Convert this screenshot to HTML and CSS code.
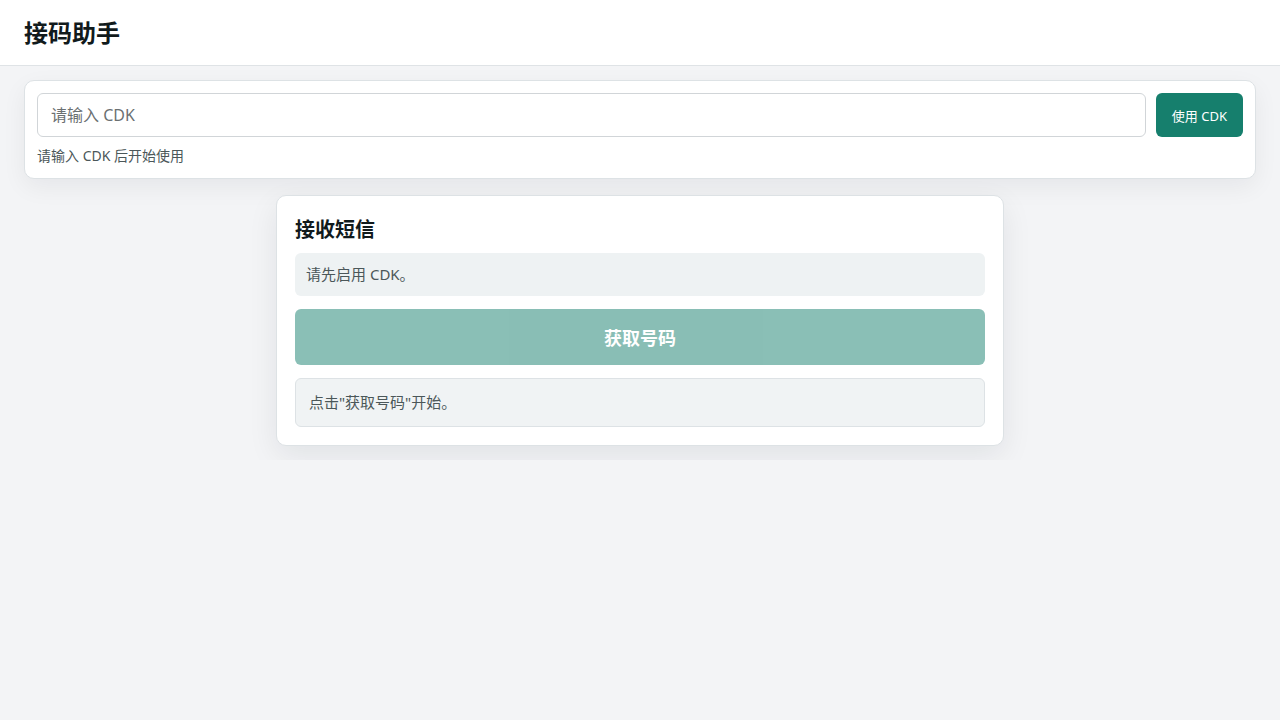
FILE: index.html
```html
<!DOCTYPE html>
<html lang="zh-CN">
<head>
<meta charset="utf-8">
<title>接码助手</title>
<link rel="stylesheet" href="styles.css">
</head>
<body>
<header class="topbar">
  <h1 class="brand">接码助手</h1>
</header>
<main class="main">
  <section class="cdk-card">
    <div class="cdk-row">
      <input class="cdk-input" type="text" placeholder="请输入 CDK">
      <button class="btn-primary">使用 CDK</button>
    </div>
    <p class="cdk-hint">请输入 CDK 后开始使用</p>
  </section>
  <section class="sms-card">
    <h2 class="sms-title">接收短信</h2>
    <div class="status-box">请先启用 CDK。</div>
    <button class="btn-get" disabled>获取号码</button>
    <div class="info-box">点击"获取号码"开始。</div>
  </section>
</main>
</body>
</html>
```

FILE: styles.css
```css
* { box-sizing: border-box; }
html, body { margin: 0; padding: 0; }
body {
  background: #f3f4f6;
  font-family: "Noto Sans", "Noto Sans CJK SC", sans-serif;
  color: #111827;
}
.topbar {
  background: #ffffff;
  height: 66px;
  border-bottom: 1px solid #dfe3e6;
  display: flex;
  align-items: center;
  padding: 0 24px;
}
.brand {
  margin: 0;
  font-size: 24px;
  font-weight: 700;
  color: #111a1c;
  line-height: 32px;
}
.main {
  padding: 14px 24px;
  display: flex;
  flex-direction: column;
  align-items: center;
  gap: 16px;
}
.cdk-card {
  width: 100%;
  background: #fff;
  border: 1px solid #dde2e5;
  border-radius: 10px;
  padding: 12px 12px 12px;
  box-shadow: 0 8px 24px rgba(15, 23, 42, 0.06);
}
.cdk-row {
  display: flex;
  gap: 10px;
}
.cdk-input {
  flex: 1;
  height: 44px;
  border: 1px solid #d1d5d8;
  border-radius: 6px;
  padding: 0 13px;
  font-family: inherit;
  font-size: 16px;
  color: #111;
  outline: none;
}
.cdk-input::placeholder { color: #6b7072; }
.btn-primary {
  height: 44px;
  padding: 0 16px;
  background: #167f6d;
  color: #fff;
  border: none;
  border-radius: 6px;
  font-family: inherit;
  font-size: 13px;
  font-weight: 400;
}
.cdk-hint {
  margin: 9px 0 0;
  font-size: 14px;
  line-height: 20px;
  color: #4b5759;
}
.sms-card {
  width: 100%;
  max-width: 728px;
  background: #fff;
  border: 1px solid #dde2e5;
  border-radius: 10px;
  padding: 18px;
  box-shadow: 0 10px 30px rgba(15, 23, 42, 0.08);
  display: flex;
  flex-direction: column;
}
.sms-title {
  margin: 0;
  font-size: 20px;
  line-height: 30px;
  padding-top: 1px;
  font-weight: 700;
  color: #111a1c;
}
.status-box {
  margin-top: 8px;
  background: #eef2f3;
  border-radius: 6px;
  padding: 10px 11px;
  font-size: 15px;
  line-height: 23px;
  color: #4b5759;
}
.btn-get {
  margin-top: 13px;
  height: 56px;
  border: none;
  border-radius: 6px;
  background: #167f6d;
  opacity: 0.5;
  color: #fff;
  font-family: inherit;
  font-size: 18px;
  font-weight: 700;
}
.info-box {
  margin-top: 13px;
  background: #f0f3f4;
  border: 1px solid #dde2e5;
  border-radius: 6px;
  padding: 12px 13px;
  font-size: 15px;
  line-height: 23px;
  color: #4b5759;
}
```
